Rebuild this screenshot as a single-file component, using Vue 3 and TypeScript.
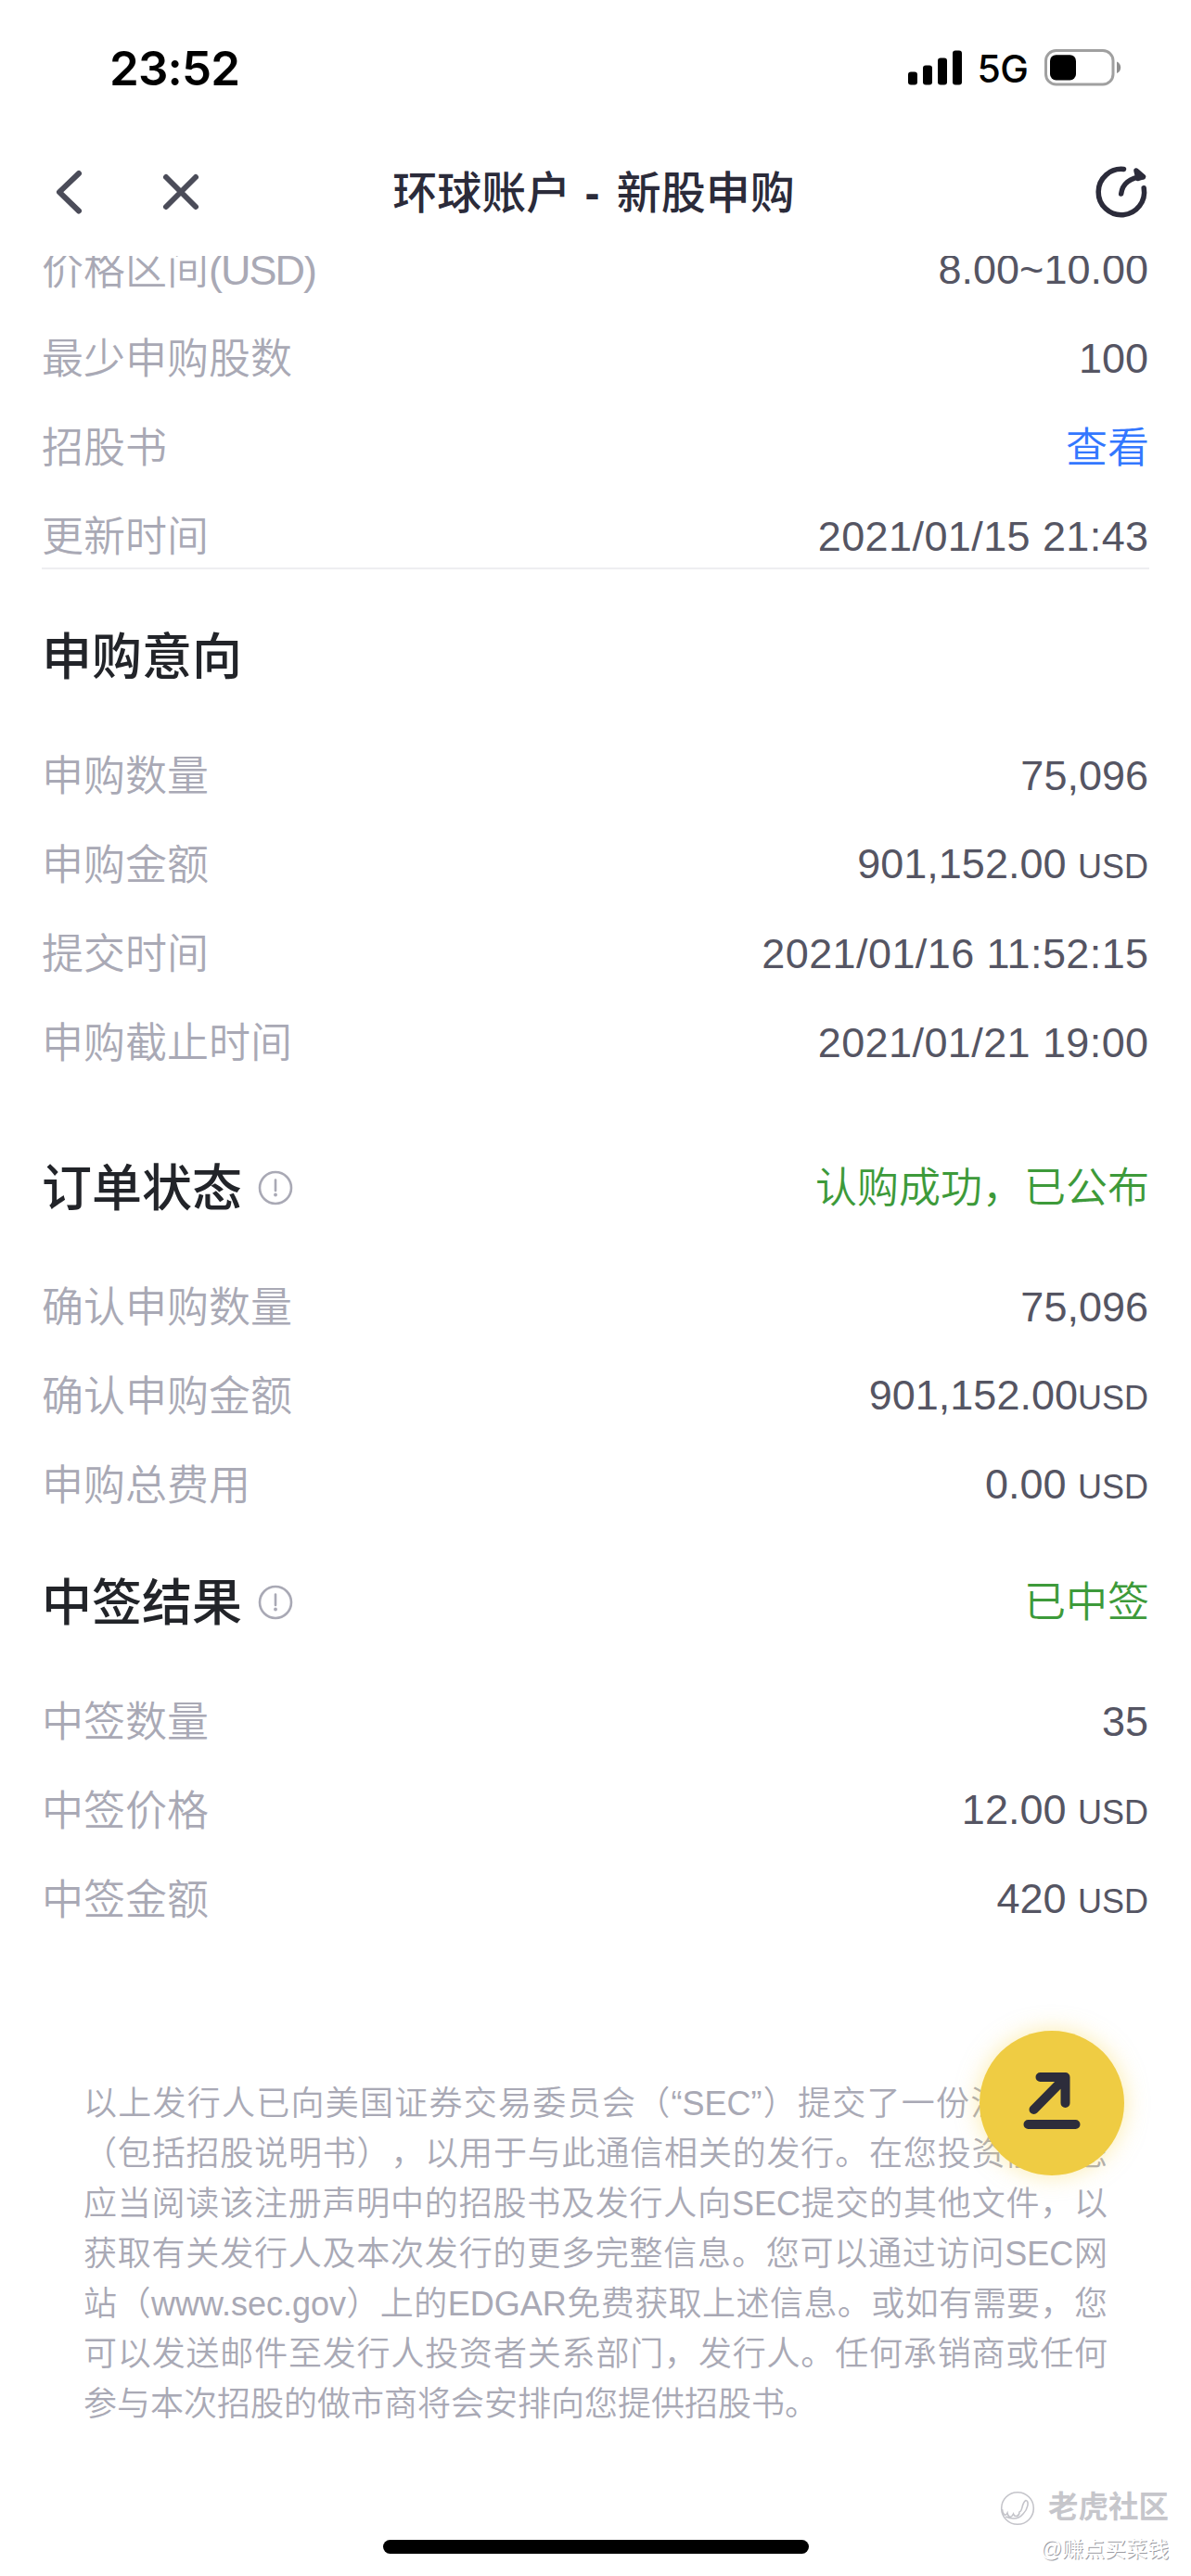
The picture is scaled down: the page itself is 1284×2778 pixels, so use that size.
<script setup lang="ts">
interface Row {
  label: string
  suffix?: string
  value: string
  unit?: string
  link?: boolean
  date?: boolean
}
interface Section {
  id: string
  title: string
  info: boolean
  status?: string
  rows: Row[]
}

const summary: Row[] = [
  { label: '价格区间', suffix: '(USD)', value: '8.00~10.00' },
  { label: '最少申购股数', value: '100' },
  { label: '招股书', value: '查看', link: true },
  { label: '更新时间', value: '2021/01/15 21:43', date: true },
]

const sections: Section[] = [
  {
    id: 'intent',
    title: '申购意向',
    info: false,
    rows: [
      { label: '申购数量', value: '75,096' },
      { label: '申购金额', value: '901,152.00 ', unit: 'USD' },
      { label: '提交时间', value: '2021/01/16 11:52:15', date: true },
      { label: '申购截止时间', value: '2021/01/21 19:00', date: true },
    ],
  },
  {
    id: 'order',
    title: '订单状态',
    info: true,
    status: '认购成功，已公布',
    rows: [
      { label: '确认申购数量', value: '75,096' },
      { label: '确认申购金额', value: '901,152.00', unit: 'USD' },
      { label: '申购总费用', value: '0.00 ', unit: 'USD' },
    ],
  },
  {
    id: 'result',
    title: '中签结果',
    info: true,
    status: '已中签',
    rows: [
      { label: '中签数量', value: '35' },
      { label: '中签价格', value: '12.00 ', unit: 'USD' },
      { label: '中签金额', value: '420 ', unit: 'USD' },
    ],
  },
]

const notice: string[] = [
  '以上发行人已向美国证券交易委员会（“SEC”）提交了一份注册声明',
  '（包括招股说明书），以用于与此通信相关的发行。在您投资前，您',
  '应当阅读该注册声明中的招股书及发行人向SEC提交的其他文件，以',
  '获取有关发行人及本次发行的更多完整信息。您可以通过访问SEC网',
  '站（www.sec.gov）上的EDGAR免费获取上述信息。或如有需要，您',
  '可以发送邮件至发行人投资者关系部门，发行人。任何承销商或任何',
  '参与本次招股的做市商将会安排向您提供招股书。',
]
</script>

<template>
  <div class="screen">
    <div class="statusbar">
      <span class="clock">23:52</span>
      <div class="indicators">
        <svg class="signal" width="58" height="38" viewBox="0 0 58 38">
          <rect x="0" y="23.5" width="10" height="14" rx="3" />
          <rect x="16" y="16.5" width="10" height="21" rx="3" />
          <rect x="32" y="8.5" width="10" height="29" rx="3" />
          <rect x="48" y="0.5" width="10" height="37" rx="3" />
        </svg>
        <span class="net">5G</span>
        <svg class="battery" width="83" height="40" viewBox="0 0 83 40">
          <rect x="1.5" y="1.5" width="72.5" height="36.5" rx="11" fill="none" stroke="#a0a0a0" stroke-width="3" />
          <rect x="6" y="6.2" width="28" height="27.2" rx="6.5" fill="#000" />
          <path d="M78 13.5c2.6 1 4.2 3.3 4.2 6.3s-1.6 5.3-4.2 6.3z" fill="#8e8e8e" />
        </svg>
      </div>
    </div>

    <header class="navbar">
      <div class="nav-left">
        <svg width="32" height="50" viewBox="0 0 32 50">
          <path d="M27 5L6 25.2L27 45.5" />
        </svg>
        <svg width="42" height="42" viewBox="0 0 42 42">
          <path d="M5 5L37 37M37 5L5 37" />
        </svg>
      </div>
      <h1 class="title">环球账户 <b>-</b> 新股申购</h1>
      <svg class="reload" width="60" height="60" viewBox="0 0 60 60">
        <path d="M32.5 5.5A24.7 24.7 0 1 0 54.2 25.8" />
        <path d="M29.7 32C31 22 38.5 14.5 53 13.8" />
        <path d="M46 7L53.5 13.6L48 15.5Z" />
      </svg>
    </header>

    <main class="content">
      <div class="summary">
        <div v-for="row in summary" :key="row.label" class="row">
          <span class="label">{{ row.label }}<span v-if="row.suffix" class="suffix">{{ row.suffix }}</span></span>
          <span class="value" :class="{ link: row.link, date: row.date }">{{ row.value }}</span>
        </div>
      </div>

      <section v-for="s in sections" :key="s.id" :class="['section', s.id]">
        <div class="section-head">
          <h2>{{ s.title }}</h2>
          <svg v-if="s.info" class="info" width="38" height="38" viewBox="0 0 38 38">
            <circle cx="19" cy="19" r="17" fill="none" stroke="#a9a9b5" stroke-width="2.6" />
            <path d="M19 10.5V22" fill="none" stroke="#a9a9b5" stroke-width="2.6" stroke-linecap="round" />
            <circle cx="19" cy="26.5" r="1.9" fill="#a9a9b5" />
          </svg>
          <span v-if="s.status" class="status">{{ s.status }}</span>
        </div>
        <div v-for="row in s.rows" :key="row.label" class="row">
          <span class="label">{{ row.label }}</span>
          <span class="value" :class="{ date: row.date }">{{ row.value }}<small v-if="row.unit">{{ row.unit }}</small></span>
        </div>
      </section>

      <div class="notice">
        <p v-for="line in notice" :key="line">{{ line }}</p>
      </div>
    </main>

    <button class="fab" type="button">
      <svg width="156" height="156" viewBox="0 0 156 156">
        <path d="M65.5 50H92.5V78M90 53L58.5 85M52.5 101H103.5" />
      </svg>
    </button>

    <div class="home-bar"></div>

    <div class="watermark">
      <div class="brand">
        <svg width="38" height="38" viewBox="0 0 38 38">
          <circle cx="19" cy="19" r="17.3" />
          <path d="M2.5 20C3 26 6 28 8 24C9 29 12 30 14.5 25C16 29 21 28 21 23C25 22 23 13 28 10.5C32 11 30 20 25 25C20 31 13 31 6 28" />
        </svg>
        <span>老虎社区</span>
      </div>
      <div class="author">@赚点买菜钱</div>
    </div>
  </div>
</template>

<style>
body {
  margin: 0;
  background: #fff;
}
</style>

<style scoped>
.screen {
  position: relative;
  display: flex;
  flex-direction: column;
  width: 1284px;
  height: 2778px;
  overflow: hidden;
  background: #fff;
  font-family: 'Liberation Sans', 'Noto Sans CJK SC', sans-serif;
  text-spacing-trim: space-all;
}
.statusbar {
  display: flex;
  flex: none;
  align-items: center;
  justify-content: space-between;
  box-sizing: border-box;
  height: 146px;
  padding: 0 75px 0 118px;
  color: #000;
}
.clock {
  font: 600 51px/1 Inter, sans-serif;
  letter-spacing: -0.8px;
}
.indicators {
  display: flex;
  align-items: center;
}
.net {
  margin: 3px 18px 0 17px;
  font: 500 41px/1 Inter, sans-serif;
  letter-spacing: -0.8px;
}
.navbar {
  display: flex;
  flex: none;
  align-items: center;
  justify-content: space-between;
  box-sizing: border-box;
  height: 130px;
  padding: 0 45px 8px 58px;
}
.nav-left {
  display: flex;
  align-items: center;
  gap: 84px;
  width: 212px;
}
.nav-left svg {
  fill: none;
  stroke: #4b4c59;
  stroke-width: 6;
  stroke-linecap: round;
  stroke-linejoin: round;
}
.title {
  margin: 4px 0 0;
  color: #2b2b3a;
  font-size: 48px;
  font-weight: 500;
  line-height: 72px;
  word-spacing: 2px;
}
.title b {
  display: inline-block;
  width: 19px;
  font-weight: 700;
}
.reload {
  margin-left: 169px;
  fill: none;
  stroke: #2b2b3a;
  stroke-width: 5.5;
  stroke-linecap: round;
  stroke-linejoin: round;
}
.content {
  flex: 1;
  overflow: hidden;
  padding: 0 45px;
}
.summary {
  box-sizing: border-box;
  height: 370px;
  margin-top: -32px;
  border-bottom: 2px solid #eeeef1;
}
.row {
  display: flex;
  align-items: center;
  justify-content: space-between;
  height: 96px;
  font-size: 45px;
  line-height: 66px;
}
.label {
  color: #a9a9b5;
  font-weight: 350;
}
.suffix {
  letter-spacing: -2px;
}
.value {
  margin: -2px 1px 0 0;
  color: #555563;
  white-space: pre;
}
.value small {
  font-size: 36px;
}
.value.link {
  margin: 0;
  color: #3377ff;
  font-weight: 350;
}
.value.date {
  margin-right: 0.5px;
  letter-spacing: 0.4px;
}
.section-head {
  display: flex;
  align-items: center;
  height: 80px;
  margin-bottom: 41px;
}
h2 {
  margin: 0;
  color: #222429;
  font-size: 54px;
  font-weight: 500;
  line-height: 80px;
}
.info {
  margin: -2px 0 0 17px;
}
.status {
  margin: -10px 0 0 auto;
  color: #3d9a3a;
  font-size: 45px;
  font-weight: 350;
}
.intent {
  padding-top: 55px;
}
.order {
  padding-top: 68px;
}
.result {
  padding-top: 38px;
}
.notice {
  margin-top: 144px;
  padding: 0 45px;
  color: #a9a9b5;
  font-size: 36px;
  font-weight: 350;
  line-height: 54px;
}
.notice p {
  margin: 0;
  white-space: nowrap;
  text-align: justify;
  text-align-last: justify;
}
.notice p:last-child {
  text-align-last: left;
}
.fab {
  position: absolute;
  top: 2190px;
  left: 1056px;
  width: 156px;
  height: 156px;
  padding: 0;
  border: 0;
  border-radius: 50%;
  background: #efcc43;
  box-shadow: 0 0 24px rgba(250, 218, 90, 0.5);
}
.fab svg {
  display: block;
  fill: none;
  stroke: #2d2d3b;
  stroke-width: 10;
  stroke-linecap: round;
  stroke-linejoin: round;
}
.home-bar {
  position: absolute;
  bottom: 24px;
  left: 413px;
  width: 459px;
  height: 15px;
  border-radius: 8px;
  background: #000;
}
.watermark {
  position: absolute;
  right: 24px;
  bottom: 12px;
  display: flex;
  flex-direction: column;
  align-items: flex-end;
}
.brand {
  display: flex;
  align-items: center;
  gap: 14px;
  height: 44px;
  color: #c6c6cb;
  font-size: 32.5px;
  font-weight: 700;
  line-height: 44px;
}
.brand span {
  margin-top: -3px;
}
.brand svg {
  margin-top: -1px;
  fill: none;
  stroke: #c4c4ca;
  stroke-width: 1.6;
}
.author {
  margin-top: 5px;
  color: #fff;
  font-size: 23px;
  line-height: 34px;
  text-shadow: 1px 1px 0 #9c9ca3;
}
</style>
